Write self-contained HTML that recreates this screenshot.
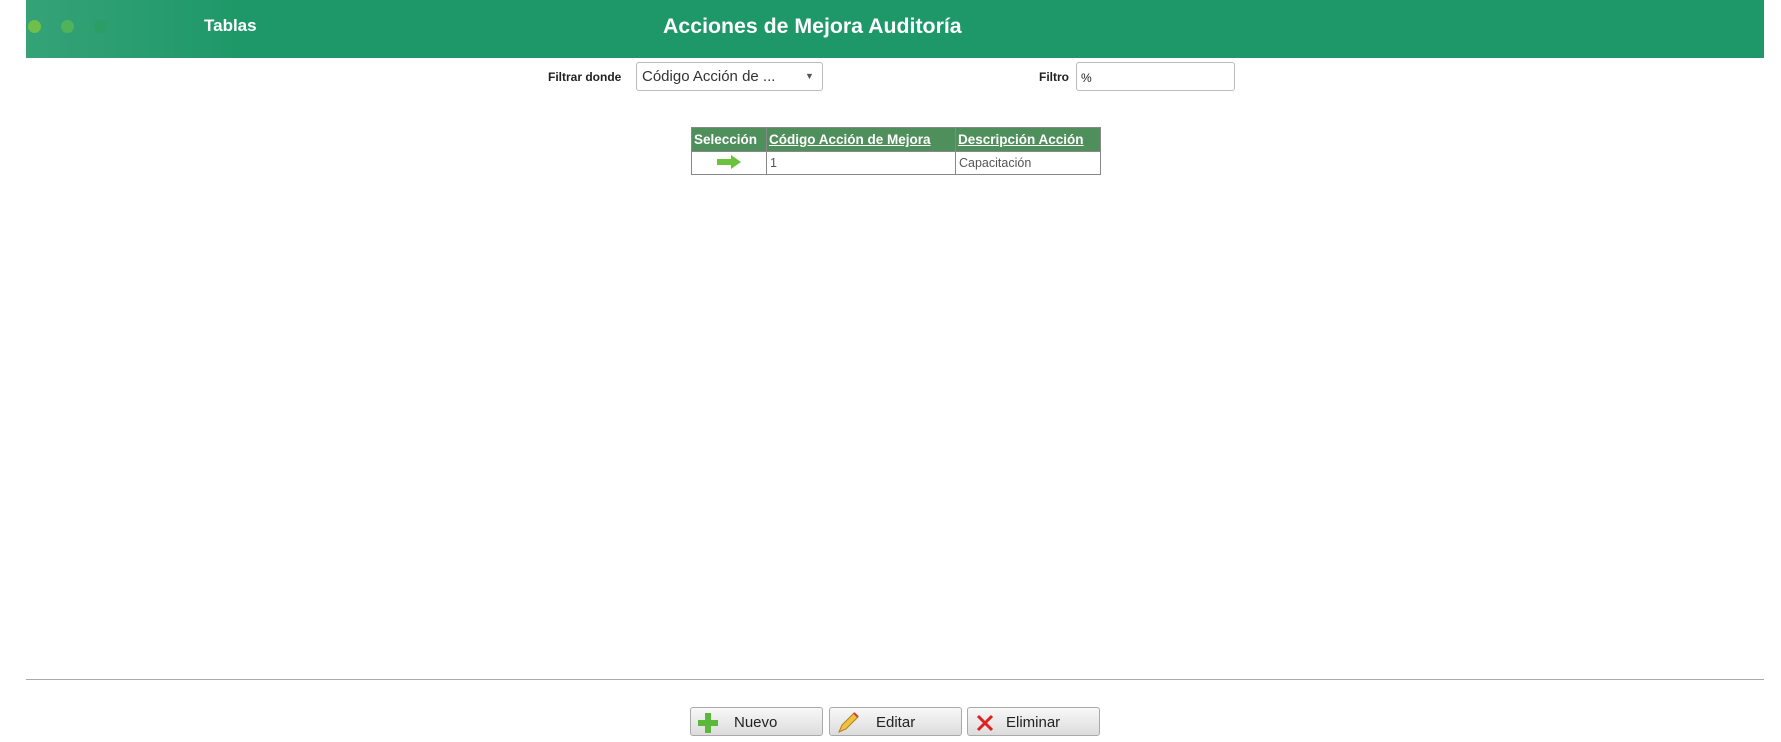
<!DOCTYPE html>
<html><head><meta charset="utf-8"><style>
body{margin:0;width:1781px;height:742px;background:#fff;font-family:"Liberation Sans",sans-serif;position:relative;overflow:hidden}
.hdr{position:absolute;left:26px;top:0;width:1738px;height:58px;background:#1e9868}
.glow{position:absolute;left:0;top:0;width:220px;height:58px;background:linear-gradient(90deg,rgba(255,255,255,.1),rgba(255,255,255,0))}
.dot{position:absolute;top:20px;width:13px;height:13px;border-radius:50%}
.a{position:absolute;white-space:nowrap}
.box{position:absolute;border:1px solid #bbb;border-radius:3px;background:#fff;box-sizing:border-box}
table{position:absolute;left:691px;top:127px;border-collapse:collapse;font-size:13.5px}
th{background:#4f8f5c;color:#fff;font-weight:bold;text-decoration:underline;height:23px;padding:0 2px;border:1px solid #888;text-align:left}
th:first-child{text-decoration:none}
td{border:1px solid #888;height:22px;color:#555;padding:0 3px;font-size:12.5px}
.btn{position:absolute;top:707px;height:29px;border:1px solid #aaa;border-radius:3px;box-sizing:border-box;background:linear-gradient(#f8f8f8,#dcdcdc);font-size:15px;color:#222}
.btn span{position:absolute;top:6px}
</style></head><body>
<div class="hdr"><div class="glow"></div>
<div class="dot" style="left:2px;background:#6fbf4a"></div>
<div class="dot" style="left:35px;background:#4fb35a"></div>
<div class="dot" style="left:68px;background:#2a9e66"></div>
<div class="a" style="left:178px;top:16px;color:#fff;font-weight:bold;font-size:17px">Tablas</div>
<div class="a" style="left:637px;top:14px;color:#fff;font-weight:bold;font-size:21.3px">Acciones de Mejora Auditoría</div>
</div>
<div class="a" style="left:548px;top:70px;font-size:12px;font-weight:bold;color:#222">Filtrar donde</div>
<div class="box" style="left:636px;top:62px;width:187px;height:29px"><span class="a" style="left:5px;top:5px;font-size:15px;color:#333">Código Acción de ...</span><span class="a" style="left:168px;top:8px;font-size:9px;color:#555">▼</span></div>
<div class="a" style="left:1039px;top:70px;font-size:12px;font-weight:bold;color:#222">Filtro</div>
<div class="box" style="left:1076px;top:62px;width:159px;height:29px"><span class="a" style="left:4px;top:8px;font-size:12px;color:#222">%</span></div>
<table>
<tr><th style="width:70px">Selección</th><th style="width:184px">Código Acción de Mejora</th><th style="width:140px">Descripción Acción</th></tr>
<tr><td style="text-align:center"><svg width="28" height="14" viewBox="0 0 28 14"><path d="M2 4h14V0l10 7-10 7v-4H2z" fill="#6cc23a"/></svg></td><td>1</td><td>Capacitación</td></tr>
</table>
<div style="position:absolute;left:26px;top:679px;width:1738px;height:1px;background:#aaa"></div>
<div class="btn" style="left:690px;width:133px"><svg style="position:absolute;left:6px;top:4px" width="22" height="22" viewBox="0 0 22 22"><path d="M8 1h6v7h7v6h-7v7H8v-7H1V8h7z" fill="#5cb83a"/></svg><span style="left:43px">Nuevo</span></div>
<div class="btn" style="left:829px;width:133px"><svg style="position:absolute;left:6px;top:3px" width="24" height="24" viewBox="0 0 24 24"><path d="M3 21l3-7L18 2l4 4L10 18z" fill="#f0c040" stroke="#b08020"/><path d="M18 2l4 4" stroke="#d04040" stroke-width="2"/></svg><span style="left:46px">Editar</span></div>
<div class="btn" style="left:967px;width:133px"><svg style="position:absolute;left:8px;top:6px" width="18" height="18" viewBox="0 0 18 18"><path d="M2 2l14 14M16 2L2 16" stroke="#e02020" stroke-width="3"/></svg><span style="left:38px">Eliminar</span></div>
</body></html>
